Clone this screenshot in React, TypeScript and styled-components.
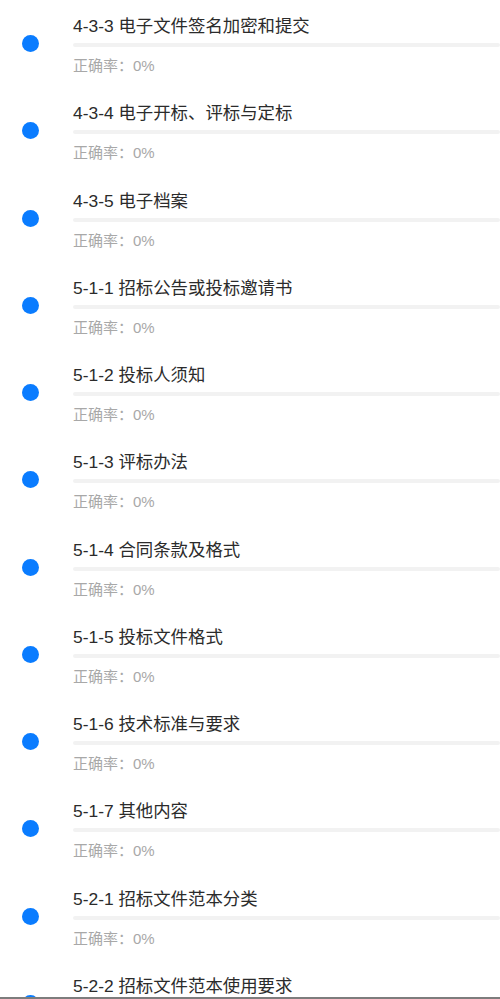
import React from 'react';
import styled, { createGlobalStyle } from 'styled-components';

const GlobalStyle = createGlobalStyle`
	html, body {
		margin: 0;
		padding: 0;
		background: #ffffff;
		overflow: hidden;
	}
	body {
		font-family: "Liberation Sans", "Noto Sans CJK SC", sans-serif;
	}
`;

const List = styled.div`
	display: flex;
	flex-direction: column;
`;

const Item = styled.div`
	height: 87.25px;
	display: flex;
	align-items: center;
	box-sizing: border-box;
`;

const Dot = styled.span`
	flex: none;
	width: 17px;
	height: 17px;
	margin-left: 22px;
	margin-right: 34px;
	border-radius: 50%;
	background: #0a7cff;
`;

const Body = styled.div`
	flex: 1;
	min-width: 0;
	align-self: stretch;
	display: flex;
	flex-direction: column;
	padding-top: 14px;
`;

const Title = styled.div`
	font-size: 17.4px;
	line-height: 24px;
	color: #2b2b2b;
	white-space: nowrap;
`;

const Bar = styled.div`
	height: 4px;
	margin-top: 5px;
	background: #f2f2f2;
	border-radius: 2px;
	overflow: hidden;
`;

const Fill = styled.div`
	height: 100%;
	background: #0a7cff;
`;

const Rate = styled.div`
	margin-top: 9px;
	font-size: 15px;
	line-height: 20px;
	color: #a8a8a8;
`;

const BottomEdge = styled.div`
	position: fixed;
	left: 0;
	right: 0;
	bottom: 0;
	height: 2px;
	background: #7d7d7d;
`;

const chapters = [
	'4-3-3 电子文件签名加密和提交',
	'4-3-4 电子开标、评标与定标',
	'4-3-5 电子档案',
	'5-1-1 招标公告或投标邀请书',
	'5-1-2 投标人须知',
	'5-1-3 评标办法',
	'5-1-4 合同条款及格式',
	'5-1-5 投标文件格式',
	'5-1-6 技术标准与要求',
	'5-1-7 其他内容',
	'5-2-1 招标文件范本分类',
	'5-2-2 招标文件范本使用要求'
];

export default function App() {
	return (
		<>
			<GlobalStyle />
			<List>
				{chapters.map((name) => {
					const rate = 0;
					return (
						<Item key={name}>
							<Dot />
							<Body>
								<Title>{name}</Title>
								<Bar>
									<Fill style={{ width: `${rate}%` }} />
								</Bar>
								<Rate>正确率：{rate}%</Rate>
							</Body>
						</Item>
					);
				})}
			</List>
			<BottomEdge />
		</>
	);
}
